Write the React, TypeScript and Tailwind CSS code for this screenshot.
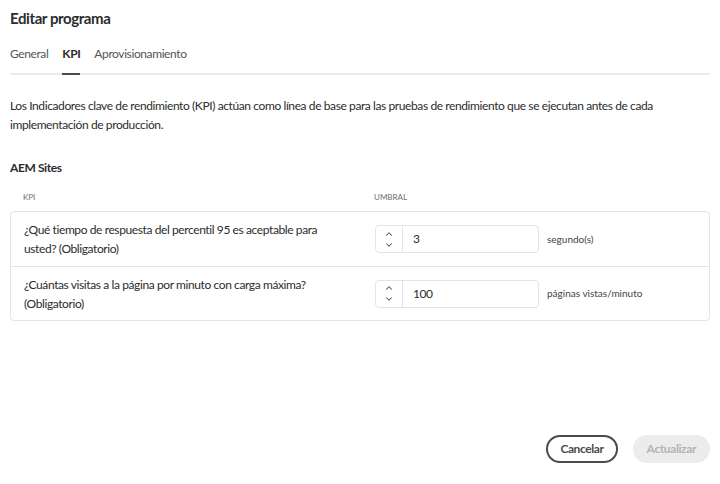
import { ChevronUp, ChevronDown } from "lucide-react";

const ROWS = [
  {
    q: "¿Qué tiempo de respuesta del percentil 95 es aceptable para usted? (Obligatorio)",
    value: "3",
    unit: "segundo(s)",
  },
  {
    q: "¿Cuántas visitas a la página por minuto con carga máxima? (Obligatorio)",
    value: "100",
    unit: "páginas vistas/minuto",
  },
];

function Stepper({ value }: { value: string }) {
  return (
    <div className="flex h-[28px] w-[164px] rounded-[4px] border border-[#e4e4e4] bg-white">
      <div className="flex w-[27px] flex-col items-center justify-center border-r border-[#e4e4e4] text-[#505050]">
        <ChevronUp size={10} strokeWidth={2.5} />
        <ChevronDown size={10} strokeWidth={2.5} className="mt-[1px]" />
      </div>
      <div className="flex items-center pl-[10px] text-[12px] text-[#2c2c2c]">{value}</div>
    </div>
  );
}

export default function App() {
  return (
    <div
      className="flex h-[484px] w-[720px] flex-col bg-white px-[10px] tracking-[-0.4px] text-[#2c2c2c]"
      style={{ fontFamily: 'Lato, "Liberation Sans", Arial, sans-serif' }}
    >
      <h1 className="pt-[8px] text-[15px] font-bold leading-[20px]">Editar programa</h1>

      {/* Tabs */}
      <div className="mt-[17px] flex gap-[14px] border-b-2 border-[#eaeaea] text-[12px]">
        <div className="pb-[10px] text-[#555]">General</div>
        <div className="-mb-[2px] border-b-2 border-[#4b4b4b] pb-[10px] font-bold text-[#2c2c2c]">KPI</div>
        <div className="pb-[10px] text-[#555]">Aprovisionamiento</div>
      </div>

      <p className="mt-[21px] text-[12px] leading-[19px] text-[#2c2c2c]">
        Los Indicadores clave de rendimiento (KPI) actúan como línea de base para las pruebas de rendimiento que se ejecutan antes de cada implementación de producción.
      </p>

      <h2 className="mt-[24px] text-[12px] font-bold leading-[19px]">AEM Sites</h2>

      {/* Table header */}
      <div className="mt-[14px] flex text-[8px] uppercase tracking-normal text-[#6e6e6e]">
        <div className="w-[364px] pl-[13px]">KPI</div>
        <div>UMBRAL</div>
      </div>

      <div className="mt-[8px] rounded-[4px] border border-[#e4e4e4]">
        {ROWS.map((r, i) => (
          <div
            key={i}
            className={`flex h-[54px] items-center ${i > 0 ? "border-t border-[#e4e4e4]" : ""}`}
          >
            <div className="w-[364px] pl-[13px] pr-[34px] text-[12px] leading-[19px]">{r.q}</div>
            <Stepper value={r.value} />
            <div className="ml-[8px] text-[10px] tracking-normal text-[#444]">{r.unit}</div>
          </div>
        ))}
      </div>

      <div className="mt-auto mb-[21px] flex justify-end gap-[15px]">
        <button className="h-[28px] rounded-full border-2 border-[#4b4b4b] px-[12px] text-[12px] font-bold text-[#4b4b4b]">
          Cancelar
        </button>
        <button className="h-[28px] rounded-full bg-[#ececec] px-[14px] text-[12px] font-bold text-[#b3b3b3]">
          Actualizar
        </button>
      </div>
    </div>
  );
}
